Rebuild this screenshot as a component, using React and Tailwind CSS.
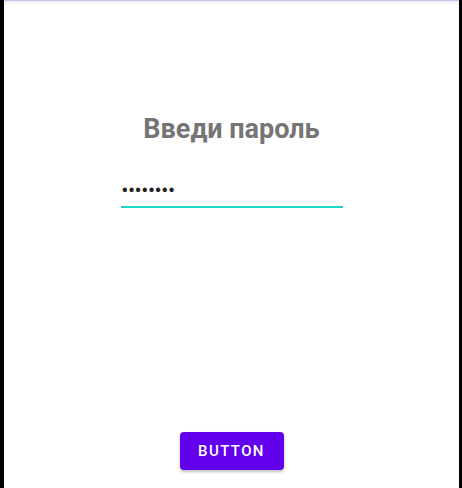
import React from "react";

const App = () => {
  return (
    <div
      className="flex h-[488px] w-[462px] bg-black"
      style={{ fontFamily: "Roboto, 'Noto Sans', sans-serif" }}
    >
      <div className="ml-[4px] mr-[3px] flex flex-1 flex-col bg-white">
        {/* top bar edge */}
        <div className="h-[1px] bg-[#cdc4f4]" />
        <div className="h-[4px] bg-gradient-to-b from-[#ecebf3] to-white" />

        <div className="flex flex-1 flex-col items-center">
          <h1 className="mt-[108px] text-[27px] font-bold leading-[32px] text-[#757575]">
            Введи пароль
          </h1>

          <div className="mt-[33px] w-[222px]">
            <div className="h-[26px] pl-[1px] text-[18px] font-bold leading-[26px] tracking-[0.2px] text-[#222]">
              ••••••••
            </div>
            <div className="mt-[2px] h-[2px] bg-[#1ed6c4]" />
          </div>

          <div className="flex-1" />

          <button className="mb-[18px] h-[38px] w-[104px] rounded-[4px] bg-[#6200ee] text-[15px] font-medium tracking-[1.4px] text-white shadow-[0_2px_3px_rgba(0,0,0,0.25)]">
            BUTTON
          </button>
        </div>
      </div>
    </div>
  );
};

export default App;
